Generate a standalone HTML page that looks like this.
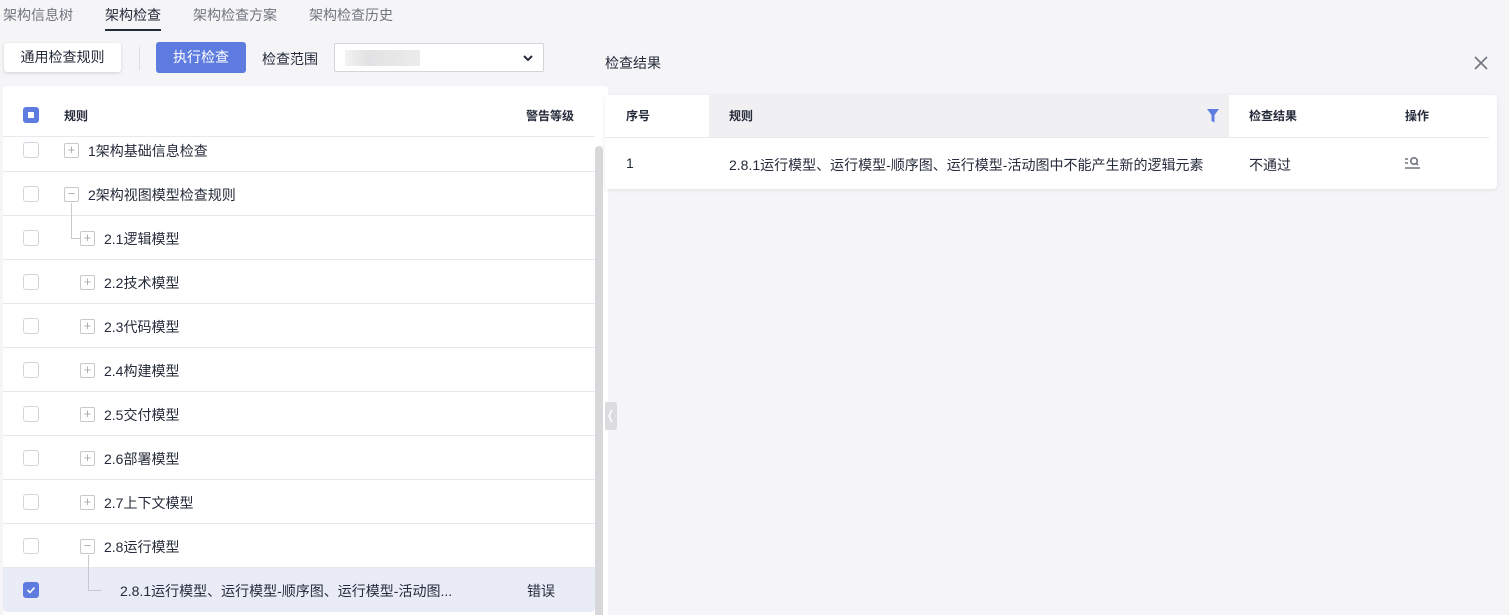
<!DOCTYPE html>
<html><head><meta charset="utf-8"><style>
*{margin:0;padding:0;box-sizing:border-box}
body{width:1509px;height:615px;background:#f5f5f7;font-family:"Liberation Sans","Noto Sans CJK SC",sans-serif;font-size:14px;color:#252b3a;position:relative;overflow:hidden}
.a{position:absolute}
.tab{top:5px;font-size:14px;color:#71757f}
.row{position:absolute;left:3px;width:592px;height:44px;border-bottom:1px solid #e8e8ee}
.cb{position:absolute;left:20px;width:16px;height:16px;border:1px solid #d4d5da;border-radius:3px;background:#fff}
.ex{position:absolute;width:15px;height:15px;border:1px solid #c8c9ce;border-radius:2px;background:#fff;color:#aaa;font-size:13px;line-height:12px;text-align:center}
.t{position:absolute;font-size:14px}
</style></head><body>
<div class="a tab" style="left:3px">架构信息树</div>
<div class="a tab" style="left:105px;color:#252b3a">架构检查</div>
<div class="a" style="top:29px;width:56px;height:2px;background:#252b3a;left:105px"></div>
<div class="a tab" style="left:193px">架构检查方案</div>
<div class="a tab" style="left:309px">架构检查历史</div>

<div class="a" style="left:4px;top:43px;width:117px;height:29px;background:#fff;border-radius:3px;box-shadow:0 1px 3px rgba(0,0,0,.15);text-align:center;line-height:29px;font-size:14px">通用检查规则</div>
<div class="a" style="left:139px;top:47px;width:1px;height:23px;background:#dcdde0"></div>
<div class="a" style="left:156px;top:42px;width:90px;height:31px;background:#5e7ce0;border-radius:3px;color:#fff;text-align:center;line-height:31px;font-size:14px">执行检查</div>
<div class="a" style="left:262px;top:49px;font-size:14px">检查范围</div>
<div class="a" style="left:334px;top:43px;width:210px;height:29px;background:#fff;border:1px solid #d4d5da;border-radius:2px"></div>
<div class="a" style="left:345px;top:50px;width:75px;height:16px;background:linear-gradient(90deg,#f2f2f2,#e2e2e4 30%,#ececec)"></div>
<svg class="a" style="left:522px;top:53px" width="12" height="10"><path d="M2 3l4 4 4-4" stroke="#252b3a" stroke-width="2" fill="none"/></svg>

<div class="a" style="left:3px;top:86px;width:605px;height:529px;background:#fff;border-radius:4px 4px 0 0"></div>
<div class="a" style="left:3px;top:86px;width:592px;height:51px;border-bottom:1px solid #e8e8ee"></div>
<div class="a" style="left:23px;top:107px;width:16px;height:16px;background:#5e7ce0;border-radius:3px"><div style="margin:5px;width:6px;height:6px;background:#fff"></div></div>
<div class="a" style="left:64px;top:107px;font-weight:bold;font-size:12px">规则</div>
<div class="a" style="left:526px;top:107px;font-weight:bold;font-size:12px">警告等级</div>

<div class="row" style="top:137px;height:35px"><div class="cb" style="top:5px"></div><div class="ex" style="left:61px;top:6px">+</div><div class="t" style="left:85px;top:4px">1架构基础信息检查</div></div>
<div class="row" style="top:172px"><div class="cb" style="top:14px"></div><div class="ex" style="left:61px;top:15px">−</div><div class="t" style="left:85px;top:13px">2架构视图模型检查规则</div></div>
<div class="a" style="left:71px;top:203px;width:1px;height:36px;background:#c8c9ce"></div><div class="a" style="left:71px;top:238px;width:9px;height:1px;background:#c8c9ce"></div>
<div class="row" style="top:216px"><div class="cb" style="top:14px"></div><div class="ex" style="left:77px;top:15px">+</div><div class="t" style="left:101px;top:13px">2.1逻辑模型</div></div>
<div class="row" style="top:260px"><div class="cb" style="top:14px"></div><div class="ex" style="left:77px;top:15px">+</div><div class="t" style="left:101px;top:13px">2.2技术模型</div></div>
<div class="row" style="top:304px"><div class="cb" style="top:14px"></div><div class="ex" style="left:77px;top:15px">+</div><div class="t" style="left:101px;top:13px">2.3代码模型</div></div>
<div class="row" style="top:348px"><div class="cb" style="top:14px"></div><div class="ex" style="left:77px;top:15px">+</div><div class="t" style="left:101px;top:13px">2.4构建模型</div></div>
<div class="row" style="top:392px"><div class="cb" style="top:14px"></div><div class="ex" style="left:77px;top:15px">+</div><div class="t" style="left:101px;top:13px">2.5交付模型</div></div>
<div class="row" style="top:436px"><div class="cb" style="top:14px"></div><div class="ex" style="left:77px;top:15px">+</div><div class="t" style="left:101px;top:13px">2.6部署模型</div></div>
<div class="row" style="top:480px"><div class="cb" style="top:14px"></div><div class="ex" style="left:77px;top:15px">+</div><div class="t" style="left:101px;top:13px">2.7上下文模型</div></div>
<div class="row" style="top:524px"><div class="cb" style="top:14px"></div><div class="ex" style="left:77px;top:15px">−</div><div class="t" style="left:101px;top:13px">2.8运行模型</div></div>
<div class="row" style="top:568px;background:#e9ecf7;border:none;border-radius:0 0 4px 4px"><div class="cb" style="top:14px;background:#5e7ce0;border-color:#5e7ce0"><svg width="14" height="14" style="position:absolute;left:0;top:0"><path d="M3.5 7l2.5 2.5 4.5-5" stroke="#fff" stroke-width="1.6" fill="none"/></svg></div><div class="t" style="left:117px;top:13px">2.8.1运行模型、运行模型-顺序图、运行模型-活动图...</div><div class="t" style="left:524px;top:13px">错误</div></div>
<div class="a" style="left:88px;top:555px;width:1px;height:36px;background:#c8c9ce"></div><div class="a" style="left:88px;top:590px;width:14px;height:1px;background:#c8c9ce"></div>

<div class="a" style="left:595px;top:146px;width:8px;height:469px;background:#d8d8da;border-radius:4px 4px 0 0"></div>
<div class="a" style="left:605px;top:402px;width:12px;height:28px;background:#dcdcde;border-radius:0 3px 3px 0"></div>
<svg class="a" style="left:607px;top:408px" width="8" height="16"><path d="M5 2L2 8l3 6" stroke="#fff" stroke-width="1.5" fill="none"/></svg>

<div class="a" style="left:605px;top:53px;font-size:14px">检查结果</div>
<svg class="a" style="left:1474px;top:56px" width="14" height="14"><path d="M1 1l12 12M13 1L1 13" stroke="#71757f" stroke-width="1.6"/></svg>

<div class="a" style="left:605px;top:95px;width:892px;height:94px;background:#fff;border-radius:4px;box-shadow:0 1px 4px rgba(0,0,0,.08)"></div>
<div class="a" style="left:709px;top:95px;width:520px;height:42px;background:#f0f0f2"></div>
<div class="a" style="left:605px;top:137px;width:884px;height:1px;background:#e8e8ee"></div>
<div class="a" style="left:626px;top:107px;font-weight:bold;font-size:12px">序号</div>
<div class="a" style="left:729px;top:107px;font-weight:bold;font-size:12px">规则</div>
<svg class="a" style="left:1207px;top:109px" width="12" height="14"><path d="M0 0h12L7.5 6v7.5L4.5 12V6z" fill="#5e7ce0"/></svg>
<div class="a" style="left:1249px;top:107px;font-weight:bold;font-size:12px">检查结果</div>
<div class="a" style="left:1405px;top:107px;font-weight:bold;font-size:12px">操作</div>
<div class="a" style="left:626px;top:155px">1</div>
<div class="a" style="left:729px;top:155px">2.8.1运行模型、运行模型-顺序图、运行模型-活动图中不能产生新的逻辑元素</div>
<div class="a" style="left:1249px;top:155px">不通过</div>
<svg class="a" style="left:1405px;top:156px" width="16" height="14"><path d="M0 3h3M0 7h3" stroke="#71757f" stroke-width="1.5"/><circle cx="9" cy="5" r="3.2" stroke="#71757f" stroke-width="1.6" fill="none"/><path d="M11 7l2 2M0 12h15" stroke="#71757f" stroke-width="1.6"/></svg>
</body></html>
